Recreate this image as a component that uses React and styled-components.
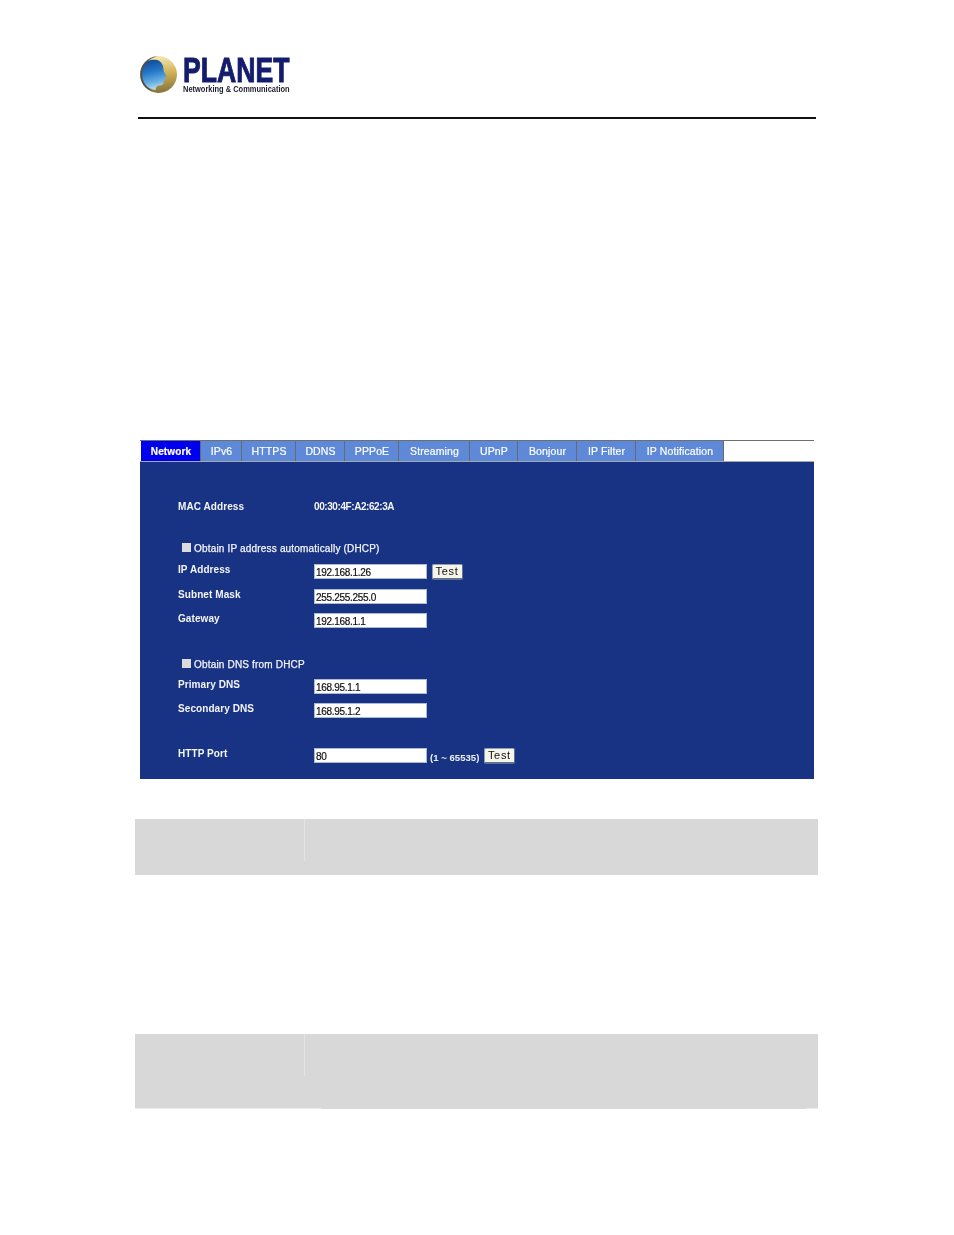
import React from "react";
import styled, { createGlobalStyle } from "styled-components";

const Global = createGlobalStyle`
  html, body { margin: 0; padding: 0; background: #fff; }
  body { font-family: "Liberation Sans", Arial, sans-serif; }
`;

const Page = styled.div`
  width: 954px;
  height: 1235px;
  box-sizing: border-box;
  padding-top: 55px;
  overflow: hidden;
`;

const Header = styled.header`
  margin: 0 138px;
  height: 64px;
  box-sizing: border-box;
  border-bottom: 2px solid #111;
  display: flex;
  align-items: flex-start;
  gap: 5px;
  padding-left: 1px;
`;

const Wordmark = styled.div`
  display: flex;
  flex-direction: column;
  width: 108px;
`;

const Brand = styled.div`
  font-size: 35px;
  font-weight: 700;
  line-height: 30px;
  height: 30px;
  color: #141c6e;
  transform: scaleX(0.76);
  transform-origin: left center;
  white-space: nowrap;
  -webkit-text-stroke: 1px #141c6e;
`;

const Tagline = styled.div`
  font-size: 9px;
  font-weight: 700;
  line-height: 9px;
  color: #1c1c2c;
  transform: scaleX(0.83);
  transform-origin: left center;
  white-space: nowrap;
`;

const Panel = styled.section`
  margin: 321px 140px 0;
  width: 674px;
  filter: blur(0.25px);
`;

const TabBar = styled.nav`
  display: flex;
  height: 20px;
  padding-left: 1px;
  border-top: 1px solid #6f6f6f;
  border-bottom: 1px solid #a8a8a8;
  background: #fff;
`;

const Tab = styled.div`
  width: ${(p) => p.$w}px;
  box-sizing: border-box;
  display: flex;
  align-items: center;
  justify-content: center;
  padding-left: 1px;
  font-size: ${(p) => (p.$active ? 10 : 10.5)}px;
  font-weight: ${(p) => (p.$active ? 700 : 400)};
  letter-spacing: 0.12px;
  color: #fff;
  background: ${(p) => (p.$active ? "#0000ee" : "#5e88d8")};
  border-right: 1px solid #666a76;
  -webkit-text-stroke: 0.2px #fff;
`;

const Body = styled.div`
  background: #183383;
  height: 317px;
  box-sizing: border-box;
  padding: 37px 0 0 38px;
  display: flex;
  flex-direction: column;
  color: #fff;
`;

const Row = styled.div`
  display: flex;
  align-items: flex-start;
  height: 15px;
  margin-top: ${(p) => p.$mt || 0}px;
  font-size: 10px;
  line-height: 15px;
  font-weight: 700;
`;

const Label = styled.div`
  width: 136px;
  margin-top: ${(p) => (p.$raise ? -2 : 0)}px;
  letter-spacing: 0.08px;
  color: #f4f4f8;
`;

const Value = styled.div`
  letter-spacing: -0.42px;
  color: #f4f4f8;
`;

const CheckRow = styled.label`
  display: flex;
  align-items: center;
  gap: 3px;
  padding-left: 4px;
  font-weight: 400;
  font-size: 10px;
  letter-spacing: 0.18px;
  -webkit-text-stroke: 0.25px #f4f4f8;
  color: #f4f4f8;
`;

const Check = styled.span`
  width: 9px;
  height: 9px;
  background: #dcdcdc;
  margin-top: -2px;
`;

const Field = styled.input`
  width: 113px;
  height: 15px;
  box-sizing: border-box;
  border: 1px solid #a9bbd2;
  padding: 1px 0 0 1px;
  margin: 0;
  background: #fff;
  font-family: "Liberation Sans", Arial, sans-serif;
  font-size: 10px;
  letter-spacing: -0.3px;
  color: #111;
  -webkit-text-stroke: 0.2px #111;
  outline: none;
`;

const TestButton = styled.button`
  width: 31px;
  height: 16px;
  margin: 0 0 0 ${(p) => p.$ml}px;
  padding: 0 1px 2px 0;
  box-sizing: border-box;
  border: 1px solid #8ea0b8;
  border-radius: 2px;
  border-right-color: #5f7390;
  border-bottom: 2px solid #5f7390;
  background: #f7f5ea;
  font-family: "Liberation Sans", Arial, sans-serif;
  font-size: 11px;
  letter-spacing: 0.7px;
  color: #111;
`;

const Hint = styled.span`
  margin-left: 3px;
  margin-top: 2px;
  font-size: 9.5px;
  letter-spacing: 0.05px;
  white-space: nowrap;
  color: #eef0f6;
`;

const Block = styled.div`
  margin: ${(p) => p.$mt}px 136px 0 135px;
  width: 683px;
  height: ${(p) => p.$h}px;
  background: #d8d8d8;
  display: flex;
  flex-direction: column;
`;

const BlockTop = styled.div`
  width: 170px;
  height: 42px;
  box-sizing: border-box;
  border-right: 1px solid #e4e4e4;
`;

const BlockEdge = styled.div`
  margin-top: auto;
  height: 1px;
  display: flex;
  justify-content: space-between;
`;

const EdgePiece = styled.div`
  width: ${(p) => p.$w}px;
  background: #ececec;
`;

const Globe = () => (
  <svg width="39" height="39" viewBox="0 0 39 39" style={{ flex: "none" }}>
    <defs>
      <linearGradient id="sea" x1="0.3" y1="0" x2="0.5" y2="1">
        <stop offset="0" stopColor="#12488f" />
        <stop offset="0.4" stopColor="#2478c8" />
        <stop offset="0.75" stopColor="#69b0e4" />
        <stop offset="1" stopColor="#c4e0f0" />
      </linearGradient>
      <linearGradient id="gold" x1="0.6" y1="0" x2="0.7" y2="1">
        <stop offset="0" stopColor="#f5e9b8" />
        <stop offset="0.45" stopColor="#d2b258" />
        <stop offset="1" stopColor="#84703a" />
      </linearGradient>
    </defs>
    <circle cx="19.500" cy="19.500" r="18.500" fill="url(#gold)" />
    <path
      d="M3.500 11 C7 5.500 13 4 18 5 C22 6 24.500 10 24.500 14 C24.500 16 25 17 26 18.500 L28 21.500 L25.500 22.500 L26 25 L24.500 26 L24.800 28 C24 30 22 30.500 20 30.500 C18 30.500 17 32 16.500 35 C9 34 3.500 29 2.800 22 C2.500 18 2.500 14 3.500 11 Z"
      fill="url(#sea)"
    />
    <path
      d="M1.200 19.500 C1 10 8.500 1.500 18.500 1.200 C10 3 4 10 3.200 19 C3 26 7 32.500 14 36 C6.500 35 1.300 27.500 1.200 19.500 Z"
      fill="#4c5157"
    />
  </svg>
);

const tabs = [
  ["Network", 60, true],
  ["IPv6", 41],
  ["HTTPS", 54],
  ["DDNS", 49],
  ["PPPoE", 54],
  ["Streaming", 71],
  ["UPnP", 48],
  ["Bonjour", 59],
  ["IP Filter", 59],
  ["IP Notification", 88],
];

const FieldRow = ({ label, value, mt, children }) => (
  <Row $mt={mt}>
    <Label $raise>{label}</Label>
    <Field readOnly value={value} />
    {children}
  </Row>
);

export default function App() {
  return (
    <Page>
      <Global />
      <Header>
        <Globe />
        <Wordmark>
          <Brand>PLANET</Brand>
          <Tagline>Networking &amp; Communication</Tagline>
        </Wordmark>
      </Header>
      <Panel>
        <TabBar>
          {tabs.map(([name, w, active]) => (
            <Tab key={name} $w={w} $active={active}>
              {name}
            </Tab>
          ))}
        </TabBar>
        <Body>
          <Row>
            <Label>MAC Address</Label>
            <Value>00:30:4F:A2:62:3A</Value>
          </Row>
          <Row $mt={27}>
            <CheckRow>
              <Check />
              Obtain IP address automatically (DHCP)
            </CheckRow>
          </Row>
          <FieldRow label="IP Address" value="192.168.1.26" mt={8}>
            <TestButton type="button" $ml={5}>Test</TestButton>
          </FieldRow>
          <FieldRow label="Subnet Mask" value="255.255.255.0" mt={10} />
          <FieldRow label="Gateway" value="192.168.1.1" mt={9} />
          <Row $mt={29}>
            <CheckRow>
              <Check />
              Obtain DNS from DHCP
            </CheckRow>
          </Row>
          <FieldRow label="Primary DNS" value="168.95.1.1" mt={7} />
          <FieldRow label="Secondary DNS" value="168.95.1.2" mt={9} />
          <FieldRow label="HTTP Port" value="80" mt={30}>
            <Hint>(1 ~ 65535)</Hint>
            <TestButton type="button" $ml={5}>Test</TestButton>
          </FieldRow>
        </Body>
      </Panel>
      <Block $mt={40} $h={56}>
        <BlockTop />
      </Block>
      <Block $mt={159} $h={75}>
        <BlockTop />
        <BlockEdge>
          <EdgePiece $w={186} />
          <EdgePiece $w={12} />
        </BlockEdge>
      </Block>
    </Page>
  );
}
